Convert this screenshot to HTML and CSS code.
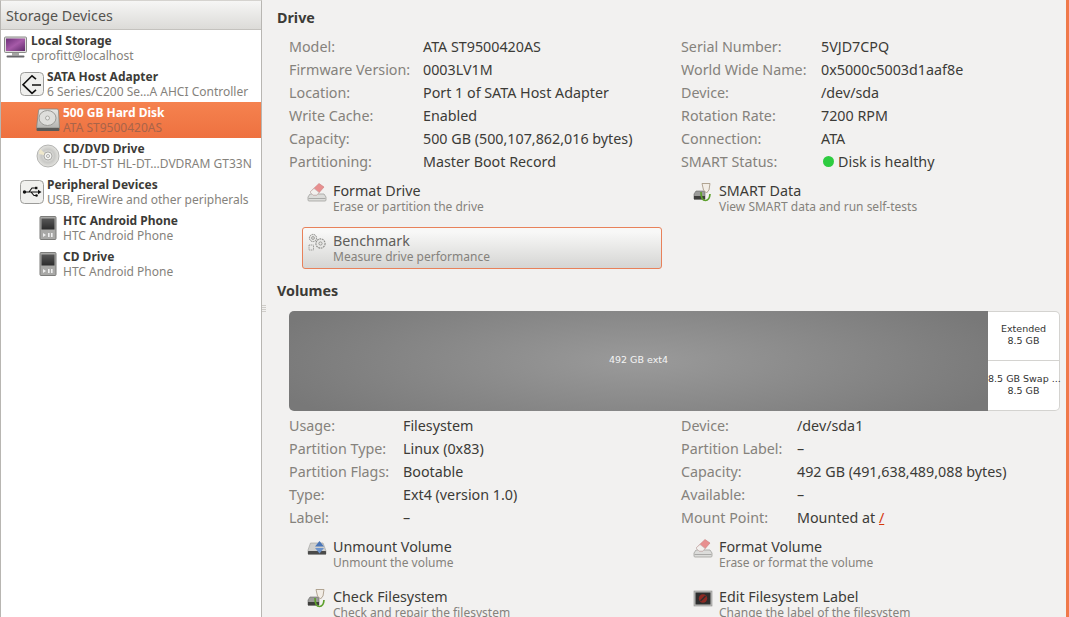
FILE: index.html
```html
<!DOCTYPE html>
<html lang="en">
<head>
    <meta charset="UTF-8">
    <title>Disk Utility</title>
    <link rel="stylesheet" href="styles.css">
</head>
<body>
    <svg class="sprites" width="0" height="0">
        <defs>
            <linearGradient id="metal" x1="0" y1="0" x2="0" y2="1">
                <stop offset="0" stop-color="#e8e8e6"/>
                <stop offset="1" stop-color="#b4b4b1"/>
            </linearGradient>
            <linearGradient id="screen" x1="0" y1="0" x2="1" y2="1">
                <stop offset="0" stop-color="#6d2f78"/>
                <stop offset="0.5" stop-color="#a65aa8"/>
                <stop offset="1" stop-color="#5e2a6a"/>
            </linearGradient>
            <radialGradient id="disc">
                <stop offset="0" stop-color="#f2f2f0"/>
                <stop offset="0.6" stop-color="#c9c9c6"/>
                <stop offset="1" stop-color="#e4e4e0"/>
            </radialGradient>
            <linearGradient id="phonescreen" x1="0" y1="0" x2="0" y2="1">
                <stop offset="0" stop-color="#585858"/>
                <stop offset="1" stop-color="#2c2c2c"/>
            </linearGradient>
            <symbol id="i-monitor" viewBox="0 0 24 24">
                <rect x="0.5" y="1" width="22" height="15.5" rx="1" fill="#dcdcda" stroke="#8a8a88"/>
                <rect x="2" y="2.5" width="19" height="12.5" fill="url(#screen)"/>
                <rect x="8" y="17" width="7" height="2.5" fill="#a5a5a3"/>
                <rect x="2.5" y="19.5" width="18" height="2" rx="1" fill="#66666a"/>
            </symbol>
            <symbol id="i-sata" viewBox="0 0 24 24">
                <rect x="0.5" y="0.5" width="23" height="23" rx="4" fill="#f0f0ee" stroke="#9c9c9a"/>
                <path d="M16 7.2 L12 3.8 L3 12.7 L12 21.4 L16 17.8 M12 13 H21" fill="none" stroke="#111" stroke-width="1.6"/>
            </symbol>
            <symbol id="i-hdd" viewBox="0 0 24 24">
                <path d="M4 1 H21 Q22.5 1 22.5 3 L23.5 20 H0.5 L2.5 3 Q2.5 1 4 1 Z" fill="url(#metal)" stroke="#85857f" stroke-width="0.8"/>
                <ellipse cx="11.5" cy="10" rx="8.5" ry="7.5" fill="#dededb" stroke="#9a9a96"/>
                <circle cx="11.5" cy="10" r="2" fill="#ececea" stroke="#9a9a96" stroke-width="0.8"/>
                <rect x="0.5" y="20" width="23" height="3" rx="1" fill="#5a5a58"/>
            </symbol>
            <symbol id="i-cd" viewBox="0 0 24 24">
                <circle cx="12" cy="12" r="11" fill="url(#disc)" stroke="#a6a6a3" stroke-width="0.8"/>
                <path d="M12 12 L4 5 A11 11 0 0 0 3 10 Z" fill="#efe8cc"/>
                <circle cx="12" cy="12" r="4" fill="#f4f4f2" stroke="#9a9a97" stroke-width="0.8"/>
                <circle cx="12" cy="12" r="1.5" fill="#fff" stroke="#9a9a97" stroke-width="0.8"/>
            </symbol>
            <symbol id="i-usb" viewBox="0 0 24 24">
                <rect x="0.5" y="0.5" width="23" height="23" rx="4" fill="#f0f0ee" stroke="#9c9c9a"/>
                <path d="M5 12 H19 M9 12 L12 8 H15 M11 12 L14 15.5 H16" fill="none" stroke="#111" stroke-width="1.1"/>
                <circle cx="4.5" cy="12" r="1.7" fill="#111"/>
                <path d="M18 9.8 L21.5 12 L18 14.2 Z" fill="#111"/>
                <rect x="15" y="6.8" width="2.4" height="2.4" fill="#111"/>
                <circle cx="16.5" cy="15.5" r="1.3" fill="#111"/>
            </symbol>
            <symbol id="i-phone" viewBox="0 0 24 24">
                <rect x="4" y="0.5" width="16" height="23" rx="1" fill="#a8a8a6" stroke="#7d7d7b"/>
                <rect x="5.5" y="2.5" width="13" height="11" fill="url(#phonescreen)"/>
                <path d="M7 17 L10 19 L7 21 Z" fill="#eee"/>
                <rect x="12" y="17" width="1.6" height="4" fill="#eee"/>
                <rect x="15" y="17" width="1.6" height="4" fill="#eee"/>
            </symbol>
            <symbol id="i-format" viewBox="0 0 20 20">
                <path d="M3 12 L1 15 V18 Q1 19 2 19 H18 Q19 19 19 18 V15 L17 12 Z" fill="#dcdcda" stroke="#a2a2a0" stroke-width="0.8"/>
                <rect x="1.5" y="16" width="17" height="1" fill="#a9a9a7"/>
                <path d="M3 10 L12 1.5 L17 5 L10 13 H6 Z" fill="#e88f8f" stroke="#c97a7a" stroke-width="0.6"/>
                <path d="M3 10 L6 13 H10 L12 10.5 L7 6.5 Z" fill="#f3f0ee" stroke="#bdbab8" stroke-width="0.6"/>
            </symbol>
            <symbol id="i-smart" viewBox="0 0 20 20">
                <path d="M3 9 H12 V17 H1 V12 Z" fill="#9b9b99" stroke="#6a6a68" stroke-width="0.6"/>
                <rect x="1" y="14" width="11" height="3.5" fill="#3e3e3c"/>
                <path d="M9 1.5 H17 L16 8 L13.5 11 L10.5 8 Z" fill="#f2ede6" stroke="#a99b88" stroke-width="0.9"/>
                <path d="M8 10 Q8 18.5 12.5 18.5 Q16.5 18.5 17 12" fill="none" stroke="#5da02c" stroke-width="1.7"/>
            </symbol>
            <symbol id="i-gears" viewBox="0 0 20 20">
                <circle cx="6" cy="6" r="3.6" fill="#e8e8e6" stroke="#8b8b88" stroke-width="1" stroke-dasharray="1.6 0.6"/>
                <circle cx="6" cy="6" r="1.4" fill="none" stroke="#8b8b88" stroke-width="0.8"/>
                <circle cx="13.5" cy="11.5" r="4.6" fill="#e8e8e6" stroke="#8b8b88" stroke-width="1.1" stroke-dasharray="1.8 0.7"/>
                <circle cx="13.5" cy="11.5" r="1.6" fill="none" stroke="#8b8b88" stroke-width="0.8"/>
                <rect x="2" y="13" width="4.5" height="5" fill="none" stroke="#8b8b88" stroke-width="0.8" stroke-dasharray="1.2 0.6"/>
            </symbol>
            <symbol id="i-unmount" viewBox="0 0 20 20">
                <path d="M3.5 5 H16 L19 13 V16 H1 V12 Z" fill="#cfcfcd" stroke="#9d9d9b" stroke-width="0.6"/>
                <rect x="1" y="13" width="18" height="3.5" rx="0.5" fill="#4b4b4a"/>
                <path d="M12.5 3 L17 8.5 H8 Z" fill="#4a76b8"/>
                <path d="M8 10 H17 L12.5 15.5 Z" fill="#6d94cc"/>
            </symbol>
            <symbol id="i-label" viewBox="0 0 20 20">
                <rect x="1" y="3" width="18" height="15" fill="#bcbcba" stroke="#8e8e8c" stroke-width="0.6"/>
                <rect x="2.5" y="4.5" width="15" height="12" fill="#2e2e2e"/>
                <circle cx="10" cy="10.5" r="4.2" fill="#8e2a24"/>
                <path d="M7.5 13 L12.5 8" stroke="#2e2e2e" stroke-width="1.4"/>
            </symbol>
        </defs>
    </svg>

    <div class="window">
        <!-- Device tree -->
        <aside class="sidebar">
            <div class="sidebar-head">Storage Devices</div>
            <ul class="tree">
                <li class="node"><svg class="node-icon"><use href="#i-monitor"/></svg><div><b>Local Storage</b><span>cprofitt@localhost</span></div></li>
                <li class="node depth1"><svg class="node-icon"><use href="#i-sata"/></svg><div><b>SATA Host Adapter</b><span>6 Series/C200 Se…A AHCI Controller</span></div></li>
                <li class="node depth2 selected"><svg class="node-icon"><use href="#i-hdd"/></svg><div><b>500 GB Hard Disk</b><span>ATA ST9500420AS</span></div></li>
                <li class="node depth2"><svg class="node-icon"><use href="#i-cd"/></svg><div><b>CD/DVD Drive</b><span>HL-DT-ST HL-DT…DVDRAM GT33N</span></div></li>
                <li class="node depth1"><svg class="node-icon"><use href="#i-usb"/></svg><div><b>Peripheral Devices</b><span>USB, FireWire and other peripherals</span></div></li>
                <li class="node depth2"><svg class="node-icon"><use href="#i-phone"/></svg><div><b>HTC Android Phone</b><span>HTC Android Phone</span></div></li>
                <li class="node depth2"><svg class="node-icon"><use href="#i-phone"/></svg><div><b>CD Drive</b><span>HTC Android Phone</span></div></li>
            </ul>
        </aside>

        <div class="grip"><i></i><i></i><i></i><i></i></div>

        <main class="content">
            <h2>Drive</h2>
            <div class="details drive-details">
                <dl>
                    <dt>Model:</dt><dd>ATA ST9500420AS</dd>
                    <dt>Firmware Version:</dt><dd>0003LV1M</dd>
                    <dt>Location:</dt><dd>Port 1 of SATA Host Adapter</dd>
                    <dt>Write Cache:</dt><dd>Enabled</dd>
                    <dt>Capacity:</dt><dd>500 GB (500,107,862,016 bytes)</dd>
                    <dt>Partitioning:</dt><dd>Master Boot Record</dd>
                </dl>
                <dl>
                    <dt>Serial Number:</dt><dd>5VJD7CPQ</dd>
                    <dt>World Wide Name:</dt><dd>0x5000c5003d1aaf8e</dd>
                    <dt>Device:</dt><dd>/dev/sda</dd>
                    <dt>Rotation Rate:</dt><dd>7200 RPM</dd>
                    <dt>Connection:</dt><dd>ATA</dd>
                    <dt>SMART Status:</dt><dd><em class="status-dot"></em>Disk is healthy</dd>
                </dl>
            </div>
            <div class="actions">
                <a class="action"><svg><use href="#i-format"/></svg><div><b>Format Drive</b><span>Erase or partition the drive</span></div></a>
                <a class="action"><svg><use href="#i-smart"/></svg><div><b>SMART Data</b><span>View SMART data and run self-tests</span></div></a>
                <a class="action hover"><svg><use href="#i-gears"/></svg><div><b>Benchmark</b><span>Measure drive performance</span></div></a>
            </div>

            <h2 class="volumes-head">Volumes</h2>
            <div class="partition-bar">
                <div class="part-main">492 GB ext4</div>
                <div class="part-side">
                    <div>Extended<br>8.5 GB</div>
                    <div>8.5 GB Swap ...<br>8.5 GB</div>
                </div>
            </div>
            <div class="details volume-details">
                <dl>
                    <dt>Usage:</dt><dd>Filesystem</dd>
                    <dt>Partition Type:</dt><dd>Linux (0x83)</dd>
                    <dt>Partition Flags:</dt><dd>Bootable</dd>
                    <dt>Type:</dt><dd>Ext4 (version 1.0)</dd>
                    <dt>Label:</dt><dd>–</dd>
                </dl>
                <dl>
                    <dt>Device:</dt><dd>/dev/sda1</dd>
                    <dt>Partition Label:</dt><dd>–</dd>
                    <dt>Capacity:</dt><dd>492 GB (491,638,489,088 bytes)</dd>
                    <dt>Available:</dt><dd>–</dd>
                    <dt>Mount Point:</dt><dd>Mounted at <a class="mount-link">/</a></dd>
                </dl>
            </div>
            <div class="actions">
                <a class="action"><svg><use href="#i-unmount"/></svg><div><b>Unmount Volume</b><span>Unmount the volume</span></div></a>
                <a class="action"><svg><use href="#i-format"/></svg><div><b>Format Volume</b><span>Erase or format the volume</span></div></a>
                <a class="action"><svg><use href="#i-smart"/></svg><div><b>Check Filesystem</b><span>Check and repair the filesystem</span></div></a>
                <a class="action"><svg><use href="#i-label"/></svg><div><b>Edit Filesystem Label</b><span>Change the label of the filesystem</span></div></a>
            </div>
        </main>
    </div>
</body>
</html>
```

FILE: styles.css
```css
/* Reset */
* {
    margin: 0;
    padding: 0;
    box-sizing: border-box;
}

html, body {
    height: 100%;
    overflow: hidden;
}

body {
    font-family: "Noto Sans", sans-serif;
    font-size: 14.3px;
    color: #3c3c3c;
    background-color: #f2f1f0;
}

.sprites {
    display: block;
    height: 0;
}

.window {
    display: flex;
    height: 617px;
}

/* Device tree */
.sidebar {
    width: 262px;
    flex: none;
    background-color: #fff;
    border: 1px solid #b8b6b2;
    border-top-color: #d5d3cf;
    border-bottom: none;
}

.sidebar-head {
    height: 29px;
    padding-left: 5px;
    line-height: 30px;
    color: #55534f;
    background: linear-gradient(#f6f6f5, #dcdbd8);
    border-bottom: 1px solid #c4c2be;
}

.tree {
    list-style: none;
}

.node {
    display: flex;
    align-items: center;
    gap: 3px;
    height: 36px;
    padding-left: 3px;
    font-size: 12px;
    line-height: 15px;
}

.depth1 {
    padding-left: 19px;
}

.depth2 {
    padding-left: 35px;
}

.node-icon {
    width: 24px;
    height: 24px;
    flex: none;
}

.node b {
    display: block;
    color: #3c3b37;
    font-weight: 700;
}

.node span {
    display: block;
    color: #85827c;
    white-space: nowrap;
}

.selected {
    background: linear-gradient(#f5824f, #ee7140);
}

.selected b {
    color: #fff;
}

.selected span {
    color: #a8644a;
}

/* Pane grip */
.grip {
    width: 4px;
    flex: none;
    display: flex;
    flex-direction: column;
    gap: 1px;
    padding-top: 305px;
}

.grip i {
    display: block;
    height: 1px;
    background-color: #cfcdc9;
}

/* Right pane */
.content {
    flex: 1;
    min-width: 0;
    padding: 8px 0 0 11px;
    border-right: 3px solid #f0794a;
}

h2 {
    font-size: 14.3px;
    line-height: 20px;
    font-weight: 700;
    color: #3c3b37;
}

.details {
    display: grid;
    grid-template-columns: 392px 1fr;
    padding-left: 12px;
}

.drive-details {
    margin-top: 7px;
}

.volume-details {
    margin-top: 3px;
}

dl {
    display: grid;
    line-height: 23px;
}

.drive-details dl:first-child {
    grid-template-columns: 134px 1fr;
}

.drive-details dl:last-child {
    grid-template-columns: 140px 1fr;
}

.volume-details dl {
    grid-template-columns: 114px 1fr;
}

.volume-details dl:last-child {
    grid-template-columns: 116px 1fr;
}

dt {
    color: #85827c;
    white-space: nowrap;
}

dd {
    color: #3c3b37;
    white-space: nowrap;
}

.status-dot {
    display: inline-block;
    width: 11px;
    height: 11px;
    margin: 0 4px 0 2px;
    border-radius: 50%;
    background-color: #2ecc40;
}

.mount-link {
    color: #d5380f;
    text-decoration: underline;
}

/* Action buttons */
.actions {
    display: grid;
    grid-template-columns: 360px 360px;
    column-gap: 26px;
    row-gap: 8px;
    margin-top: 4px;
    padding-left: 25px;
}

.action {
    display: flex;
    height: 42px;
    padding: 3px 0 0 4px;
    gap: 6px;
    border: 1px solid transparent;
    border-radius: 3px;
}

.action svg {
    width: 20px;
    height: 20px;
    flex: none;
    margin-top: 1px;
}

.action b {
    display: block;
    font-weight: 400;
    line-height: 19px;
    color: #3c3b37;
}

.action span {
    display: block;
    font-size: 12px;
    line-height: 14px;
    color: #85827c;
    white-space: nowrap;
}

.action.hover {
    border-color: #e8815a;
    background: linear-gradient(#f8f8f7 10%, #d5d5d3);
}

.action.hover b {
    color: #5f5e5a;
}

/* Partition bar */
.volumes-head {
    margin-top: 12px;
}

.partition-bar {
    display: flex;
    height: 100px;
    width: 771px;
    margin: 10px 0 0 12px;
    font-family: "DejaVu Sans", sans-serif;
    font-size: 9.5px;
    line-height: 12px;
    text-align: center;
}

.part-main {
    flex: 1;
    line-height: 97px;
    color: #f4f4f4;
    border-radius: 5px 0 0 5px;
    background: radial-gradient(ellipse 55% 90% at 50% 50%, #9a9a9a, #787878);
}

.part-side {
    width: 72px;
    display: flex;
    flex-direction: column;
    color: #333;
    background-color: #fff;
    border: 1px solid #d4d3d0;
    border-left: none;
    border-radius: 0 5px 5px 0;
    white-space: nowrap;
}

.part-side div {
    height: 48px;
    flex: none;
    padding-top: 11px;
}

.part-side div + div {
    flex: 1;
    border-top: 1px solid #d4d3d0;
    padding-top: 12px;
}
```
